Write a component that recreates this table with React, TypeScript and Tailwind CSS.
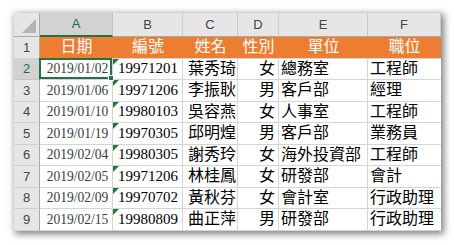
import React from "react"

const columns = ["A", "B", "C", "D", "E", "F"]
const titles = ["日期", "編號", "姓名", "性別", "單位", "職位"]

const records = [
  ["2019/01/02", "19971201", "葉秀琦", "女", "總務室", "工程師"],
  ["2019/01/06", "19971206", "李振耿", "男", "客戶部", "經理"],
  ["2019/01/10", "19980103", "吳容燕", "女", "人事室", "工程師"],
  ["2019/01/19", "19970305", "邱明煌", "男", "客戶部", "業務員"],
  ["2019/02/04", "19980305", "謝秀玲", "女", "海外投資部", "工程師"],
  ["2019/02/05", "19971206", "林桂鳳", "女", "研發部", "會計"],
  ["2019/02/09", "19970702", "黃秋芬", "女", "會計室", "行政助理"],
  ["2019/02/15", "19980809", "曲正萍", "男", "研發部", "行政助理"],
]

const serif = "font-['Liberation_Serif','Noto_Sans_CJK_TC',serif]"
const sans = "font-['Liberation_Sans','Noto_Sans',sans-serif]"

function RowHeader({ n, active }: { n: number; active?: boolean }) {
  return (
    <div
      className={`flex h-[21.5px] items-center justify-center border-b border-r text-[13px] ${sans} ${
        active
          ? "border-b-[#c4c4c4] border-r-[#217346] bg-[#d2d2d2] text-[#1e6b3f]"
          : "border-b-[#cfcfcf] border-r-[#a9a9a9] bg-[#e6e6e6] text-[#444]"
      }`}
    >
      {n}
    </div>
  )
}

export default function App() {
  return (
    <div className="h-[245px] w-[454px] bg-white pl-[14px] pt-[13px]">
      <div className="w-[427px] bg-white shadow-[2px_2px_7px_1px_rgba(0,0,0,0.5)]">
        <div className="grid grid-cols-[26px_73px_70px_55px_41px_89px_73px]">
          {/* column letters */}
          <div className="relative h-[24px] border-b border-r border-b-[#a9a9a9] border-r-[#a9a9a9] bg-[#e6e6e6]">
            <div className="absolute bottom-[3px] right-[3px] h-0 w-0 border-b-[14px] border-l-[14px] border-b-[#b4b4b4] border-l-transparent" />
          </div>
          {columns.map((c) => (
            <div
              key={c}
              className={`flex h-[24px] items-center justify-center border-r text-[13px] ${sans} ${
                c === "A"
                  ? "border-b-2 border-b-[#217346] border-r-[#c4c4c4] bg-[#d2d2d2] text-[#1e6b3f]"
                  : "border-b border-b-[#a9a9a9] border-r-[#c8c8c8] bg-[#e6e6e6] text-[#444]"
              }`}
            >
              {c}
            </div>
          ))}

          {/* orange title row */}
          <RowHeader n={1} />
          {titles.map((t) => (
            <div
              key={t}
              className={`flex h-[21.5px] items-center justify-center border-b border-b-[#d4d4d4] bg-[#ed7d31] text-[16px] leading-none text-white ${serif}`}
            >
              {t}
            </div>
          ))}

          {records.map((r, i) => (
            <React.Fragment key={i}>
              <RowHeader n={i + 2} active={i === 0} />
              <div
                className={`relative flex h-[21.5px] items-center justify-end border-b border-r border-[#d4d4d4] pr-[4px] text-[15px] leading-none text-[#3a3a3a] ${serif}`}
              >
                <span className="origin-right scale-x-[0.9] whitespace-nowrap">{r[0]}</span>
                {i === 0 && (
                  <div className="absolute -left-[1px] -top-[1px] bottom-0 right-0 z-10 border-2 border-[#217346]">
                    <div className="absolute -bottom-[4px] -right-[4px] h-[6px] w-[6px] border border-white bg-[#217346]" />
                  </div>
                )}
              </div>
              <div
                className={`relative flex h-[21.5px] items-center border-b border-r border-[#d4d4d4] pl-[5px] text-[15px] leading-none text-black ${serif}`}
              >
                <div className="absolute left-0 top-0 h-0 w-0 border-r-[6px] border-t-[6px] border-r-transparent border-t-[#1d7a3a]" />
                {r[1]}
              </div>
              <div
                className={`flex h-[21.5px] items-center border-b border-r border-[#d4d4d4] pl-[5px] text-[16px] leading-none text-black ${serif}`}
              >
                {r[2]}
              </div>
              <div
                className={`flex h-[21.5px] items-center justify-end border-b border-r border-[#d4d4d4] pr-[3px] text-[16px] leading-none text-black ${serif}`}
              >
                {r[3]}
              </div>
              <div
                className={`flex h-[21.5px] items-center border-b border-r border-[#d4d4d4] pl-[2px] text-[16px] leading-none text-black ${serif}`}
              >
                {r[4]}
              </div>
              <div
                className={`flex h-[21.5px] items-center border-b border-[#d4d4d4] pl-[2px] text-[16px] leading-none text-black ${serif}`}
              >
                {r[5]}
              </div>
            </React.Fragment>
          ))}
        </div>
      </div>
    </div>
  )
}
